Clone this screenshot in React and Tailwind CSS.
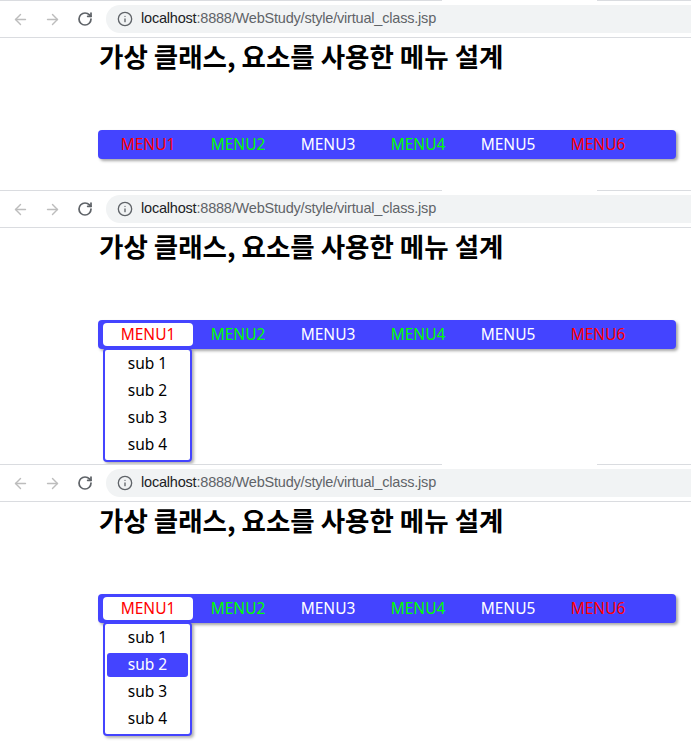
import React from 'react';
import { ArrowLeft, ArrowRight, RotateCw, Info } from 'lucide-react';

const menus = [
  { label: 'MENU1', color: 'text-[#ff0000]' },
  { label: 'MENU2', color: 'text-[#00ff00]' },
  { label: 'MENU3', color: 'text-white' },
  { label: 'MENU4', color: 'text-[#00ff00]' },
  { label: 'MENU5', color: 'text-white' },
  { label: 'MENU6', color: 'text-[#ff0000]' },
];

const subs = ['sub 1', 'sub 2', 'sub 3', 'sub 4'];

function Toolbar() {
  return (
    <div>
      {/* tab strip bottom edge */}
      <div className="flex h-px">
        <div className="w-[442px] bg-[#dadce0]" />
        <div className="w-[155px] bg-white" />
        <div className="flex-1 bg-[#dadce0]" />
      </div>
      <div className="flex h-[36px] items-center">
        <div className="flex w-[106px] shrink-0 items-center">
          <ArrowLeft className="ml-[12px] h-[17px] w-[17px] text-[#bdbdbd]" strokeWidth={2} />
          <ArrowRight className="ml-[15px] h-[17px] w-[17px] text-[#bdbdbd]" strokeWidth={2} />
          <RotateCw className="ml-[16px] h-[16px] w-[16px] text-[#5f6368]" strokeWidth={2.6} />
        </div>
        <div className="flex h-[28px] w-[620px] shrink-0 items-center rounded-full bg-[#f1f3f4] pl-[11px]">
          <Info className="h-[16px] w-[16px] text-[#5f6368]" strokeWidth={2} />
          <span className="ml-[8px] font-['Liberation_Sans',sans-serif] text-[14.5px] tracking-[-0.2px] text-[#5f6368]">
            <span className="text-[#202124]">localhost</span>:8888/WebStudy/style/virtual_class.jsp
          </span>
        </div>
      </div>
      <div className="h-px bg-[#dadce0]" />
    </div>
  );
}

function Panel({ height, open, hover }) {
  return (
    <div className={`relative overflow-hidden bg-white ${height}`}>
      <Toolbar />
      <div className="pl-[98px]">
        <h2 className="h-[36px] pl-[1px] font-['Noto_Sans_CJK_KR',sans-serif] text-[26.5px] font-bold leading-[36px] text-black">
          가상 클래스, 요소를 사용한 메뉴 설계
        </h2>
        <div className="relative mt-[56px] w-[578px]">
          <ul className="flex h-[29px] items-center rounded-[4px] bg-[#4444ff] pl-[5px] shadow-[2px_2px_3px_rgba(0,0,0,0.35)]">
            {menus.map((m, i) => (
              <li
                key={m.label}
                className={`flex h-[23px] w-[90px] items-center justify-center rounded-[4px] font-['Noto_Sans',sans-serif] text-[15.5px] ${m.color} ${
                  open && i === 0 ? 'bg-white' : ''
                }`}
              >
                {m.label}
              </li>
            ))}
          </ul>
          {open && (
            <ul className="absolute left-[5px] top-[28px] w-[89px] rounded-[4px] border-2 border-[#4444ff] bg-white pb-[2px] shadow-[2px_2px_3px_rgba(0,0,0,0.3)]">
              {subs.map((s, i) => (
                <li key={s} className="h-[27px] px-[2px] py-[1.5px]">
                  <div
                    className={`flex h-full items-center justify-center rounded-[3px] font-['Noto_Sans',sans-serif] text-[15.5px] ${
                      hover === i ? 'bg-[#4444ff] text-white' : 'text-black'
                    }`}
                  >
                    {s}
                  </div>
                </li>
              ))}
            </ul>
          )}
        </div>
      </div>
    </div>
  );
}

export default function App() {
  return (
    <div className="h-[748px] w-[691px] overflow-hidden bg-white">
      <Panel height="h-[190px]" open={false} hover={-1} />
      <Panel height="h-[274px]" open={true} hover={-1} />
      <Panel height="h-[284px]" open={true} hover={1} />
    </div>
  );
}
